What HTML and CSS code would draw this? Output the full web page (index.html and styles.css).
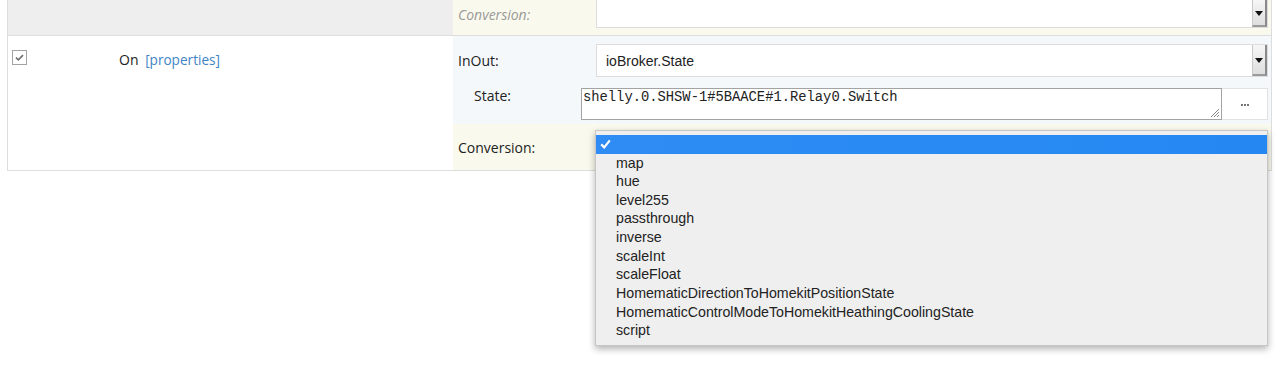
FILE: index.html
```html
<!DOCTYPE html>
<html>
<head lang="en">
    <meta charset="UTF-8">
    <title>Homekit mapping</title>
    <link rel="stylesheet" href="styles.css">
</head>
<body>
<div class="table">
    <div class="row row-prev">
        <div class="left"></div>
        <div class="right conv">
            <div class="field field-top">
                <span class="label muted">Conversion:</span>
                <div class="select select-cut">
                    <span class="select-text"></span>
                    <span class="arrow"></span>
                </div>
            </div>
        </div>
    </div>
    <div class="row row-item">
        <div class="left">
            <div class="cell-check">
                <svg class="checkbox" width="15" height="15" viewBox="0 0 15 15">
                    <rect x="0.5" y="0.5" width="14" height="14" fill="#fff" stroke="#a3a3a3"/>
                    <path d="M4 7.6 L6.4 9.8 L11 5.2" fill="none" stroke="#707070" stroke-width="1.7"/>
                </svg>
            </div>
            <div class="cell-name">On <a class="props">[properties]</a></div>
        </div>
        <div class="right">
            <div class="inout">
                <div class="field">
                    <span class="label">InOut:</span>
                    <div class="select">
                        <span class="select-text">ioBroker.State</span>
                        <span class="arrow"></span>
                    </div>
                </div>
                <div class="field field-state">
                    <span class="label label-sub">State:</span>
                    <div class="textarea">
                        shelly.0.SHSW-1#5BAACE#1.Relay0.Switch
                        <svg class="grip" width="11" height="11" viewBox="0 0 11 11">
                            <path d="M10 2 L2 10 M10 5 L5 10 M10 8 L8 10" stroke="#888" stroke-width="1"/>
                        </svg>
                    </div>
                    <div class="btn-more"><i></i><i></i><i></i></div>
                </div>
            </div>
            <div class="conv conv-row">
                <div class="field">
                    <span class="label">Conversion:</span>
                    <div class="select-wrap">
                        <div class="select">
                            <span class="select-text"></span>
                            <span class="arrow"></span>
                        </div>
                        <ul class="popup">
                            <li class="on">
                                <svg width="11" height="10" viewBox="0 0 11 10">
                                    <path d="M1.2 5.4 L4.2 8.4 L9.8 1.4" fill="none" stroke="#fff" stroke-width="2.2"/>
                                </svg>
                            </li>
                            <li>map</li>
                            <li>hue</li>
                            <li>level255</li>
                            <li>passthrough</li>
                            <li>inverse</li>
                            <li>scaleInt</li>
                            <li>scaleFloat</li>
                            <li>HomematicDirectionToHomekitPositionState</li>
                            <li>HomematicControlModeToHomekitHeathingCoolingState</li>
                            <li>script</li>
                        </ul>
                    </div>
                </div>
            </div>
        </div>
    </div>
</div>
</body>
</html>
```

FILE: styles.css
```css
* {
    margin: 0;
    padding: 0;
    list-style: none;
    box-sizing: border-box;
}

html,
body {
    min-height: 370px;
}

body {
    font-family: "Open Sans", "Liberation Sans", sans-serif;
    font-size: 14px;
    color: #222;
    background: #fff;
}

.table {
    margin-left: 7px;
    width: 1265px;
    border-left: 1px solid #ddd;
    border-right: 1px solid #ddd;
    border-bottom: 1px solid #ddd;
}

.row {
    display: flex;
}

.row-prev {
    height: 36px;
    background: #eee;
    border-bottom: 1px solid #ddd;
}

.row-item {
    height: 134px;
}

.left {
    width: 445px;
    display: flex;
}

.right {
    flex: 1;
    display: flex;
    flex-direction: column;
}

.conv {
    background: #f9f9ed;
}

.row-prev .right {
    padding: 0 3px 7px 0;
}

.field {
    display: flex;
    align-items: center;
}

.field-top {
    height: 28px;
}

.label {
    width: 143px;
    padding-left: 5px;
    flex-shrink: 0;
}

.muted {
    color: #999;
    font-style: italic;
}

/* checkbox + name */
.cell-check {
    width: 111px;
    padding: 14px 0 0 4px;
}

.checkbox {
    display: block;
}

.cell-name {
    padding-top: 14px;
    line-height: 20px;
}

.props {
    color: #3f84c5;
    margin-left: 3px;
    font-size: 13.6px;
}

/* InOut block */
.inout {
    height: 88px;
    background: #f5f8fb;
    padding: 8px 3px 4px 0;
    display: flex;
    flex-direction: column;
    gap: 11px;
}

.select {
    flex: 1;
    height: 33px;
    background: #fff;
    border: 1px solid #ddd;
    display: flex;
    align-items: center;
    justify-content: space-between;
    font-family: "Liberation Sans", Arial, sans-serif;
    font-size: 14px;
}

.select-cut {
    height: 28px;
    border-top: 0;
}

.select-text {
    padding-left: 9px;
}

.arrow {
    width: 15px;
    align-self: stretch;
    background: linear-gradient(#f6f6f6, #dedede);
    border-left: 1px solid #c9c9c9;
    border-right: 2px solid #8a8a8a;
    border-bottom: 2px solid #9a9a9a;
    position: relative;
}

.arrow::after {
    content: "";
    position: absolute;
    left: 2px;
    top: 50%;
    margin-top: -2px;
    border-left: 4px solid transparent;
    border-right: 4px solid transparent;
    border-top: 5px solid #111;
}

.field-state {
    align-items: flex-start;
    height: 32px;
}

.label-sub {
    width: 128px;
    padding-left: 21px;
    line-height: 16px;
}

.textarea {
    position: relative;
    width: 641px;
    height: 32px;
    border: 1px solid #a3a3a3;
    background: #fff;
    font-family: "Liberation Mono", monospace;
    font-size: 13.8px;
    line-height: 14px;
    padding: 2px 0 0 1px;
}

.grip {
    position: absolute;
    right: 1px;
    bottom: 1px;
}

.btn-more {
    flex: 1;
    height: 32px;
    background: #fff;
    border: 1px solid #e2e2e2;
    border-left: 0;
    display: flex;
    justify-content: center;
    align-items: center;
    gap: 1px;
    padding-top: 2px;
}

.btn-more i {
    width: 2px;
    height: 2px;
    background: #777;
}

/* Conversion row with opened list */
.conv-row {
    height: 46px;
    padding-right: 3px;
    display: flex;
    flex-direction: column;
    justify-content: center;
}

.select-wrap {
    flex: 1;
    display: flex;
    position: relative;
}

.popup {
    position: absolute;
    left: -1px;
    top: -1px;
    width: 673px;
    padding: 4px 0 5px;
    background: #efefef;
    border: 1px solid #c6c6c6;
    box-shadow: 0 3px 7px rgba(0, 0, 0, 0.3);
    font-family: "Liberation Sans", Arial, sans-serif;
    font-size: 14.2px;
    color: #222;
    z-index: 2;
}

.popup li {
    height: 18.67px;
    line-height: 18.67px;
    padding-left: 20px;
    white-space: nowrap;
}

.popup .on {
    height: 19px;
    background: linear-gradient(90deg, #2e8cf4, #2588f2);
    padding-left: 4px;
    display: flex;
    align-items: center;
}
```
